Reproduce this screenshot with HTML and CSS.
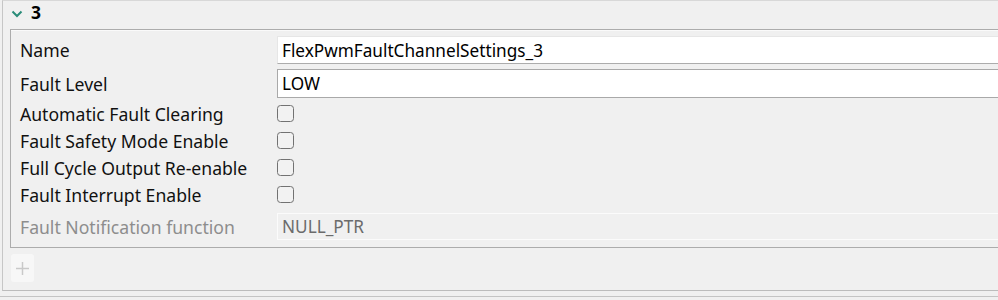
FILE: index.html
```html
<!DOCTYPE html>
<html>
  <head>
    <title>Fault Channel Settings</title>
    <meta charset="utf-8" />
    <link rel="stylesheet" href="styles.css">
  </head>
  <body>
    <div class="section">
      <div class="section-header">
        <svg class="chevron" width="12" height="8" viewBox="0 0 12 8">
          <polyline points="1.5,1.5 6,6 10.5,1.5" />
        </svg>
        <span class="section-title">3</span>
      </div>

      <div class="group">
        <div class="row row-name">
          <label class="label">Name</label>
          <input type="text" class="text-field name-field" value="FlexPwmFaultChannelSettings_3" />
        </div>

        <div class="row row-level">
          <label class="label">Fault Level</label>
          <input type="text" class="text-field combo-field" value="LOW" />
        </div>

        <div class="row row-check first-check">
          <label class="label">Automatic Fault Clearing</label>
          <input type="checkbox" class="check" />
        </div>

        <div class="row row-check">
          <label class="label">Fault Safety Mode Enable</label>
          <input type="checkbox" class="check" />
        </div>

        <div class="row row-check">
          <label class="label">Full Cycle Output Re-enable</label>
          <input type="checkbox" class="check" />
        </div>

        <div class="row row-check">
          <label class="label">Fault Interrupt Enable</label>
          <input type="checkbox" class="check" />
        </div>

        <div class="row row-disabled">
          <label class="label">Fault Notification function</label>
          <input type="text" class="text-field disabled-field" value="NULL_PTR" disabled />
        </div>
      </div>

      <div class="actions">
        <button class="add-button" disabled>
          <svg width="13" height="13" viewBox="0 0 13 13">
            <line x1="6.5" y1="0" x2="6.5" y2="13" />
            <line x1="0" y1="6.5" x2="13" y2="6.5" />
          </svg>
        </button>
      </div>
    </div>

    <div class="next-section"></div>
  </body>
</html>
```

FILE: styles.css
```css
:root {
  --bg: #f0f0f0;
  --line: #acacac;
  --value-column: 277px;
}

html,
body {
  margin: 0;
  overflow: hidden;
  background: var(--bg);
}

*,
input,
button {
  font-family: "Noto Sans", "Open Sans", sans-serif;
  font-size: 17.6px;
  box-sizing: border-box;
}

.section {
  width: 1030px;
  margin-left: 2px;
  border-top: 1px solid #d8d8d8;
  border-left: 1px solid #c6c6c6;
  border-bottom: 1px solid #bcbcbc;
}

.section-header {
  height: 28px;
  display: flex;
  align-items: center;
  padding-left: 8px;
}

.chevron {
  margin-right: 8px;
  margin-top: -2px;
}

.chevron polyline {
  fill: none;
  stroke: #2a8c79;
  stroke-width: 2;
}

.section-title {
  font-weight: bold;
  font-size: 17.5px;
  color: #000;
  line-height: 1;
  margin-top: -4px;
}

.group {
  margin-left: 7px;
  border-top: 1px solid var(--line);
  border-left: 1px solid var(--line);
  border-bottom: 1px solid var(--line);
  box-shadow: inset 0 1px #fafafa;
  padding: 6px 0 7px 9px;
}

.row {
  display: grid;
  grid-template-columns: calc(var(--value-column) - 20px) 1fr;
  align-items: center;
}

.label {
  color: #111;
  white-space: nowrap;
}

.text-field {
  margin: 0;
  padding: 0 0 0 4px;
  font-size: 17.2px;
  color: #000;
  background: #fff;
  outline: none;
  height: 100%;
}

.row-name {
  height: 28px;
}

.name-field {
  border: 1px solid #e6e6e6;
  border-bottom: 1px solid var(--line);
  border-right: none;
}

.row-level {
  height: 29px;
  margin-top: 5px;
}

.combo-field {
  border: 1px solid #a9a9a9;
  border-right: none;
}

.row-check {
  height: 27px;
}

.first-check {
  margin-top: 2px;
}

.check {
  appearance: none;
  width: 17px;
  height: 17px;
  margin: 0;
  border: 1.5px solid #727272;
  border-radius: 3.5px;
  background: #f2f2f2;
}

.row-disabled {
  height: 27px;
  margin-top: 5px;
}

.row-disabled .label {
  color: #8d8d8d;
}

.disabled-field {
  border: 1px solid #fbfbfb;
  border-right: none;
  background: #f0f0f0;
  color: #6b6b6b;
}

.actions {
  height: 42px;
  padding: 6px 0 0 8px;
}

.add-button {
  width: 23px;
  height: 28px;
  padding: 0;
  border: none;
  border-radius: 3px;
  background: #f7f7f7;
  display: flex;
  align-items: center;
  justify-content: center;
}

.add-button line {
  stroke: #c9c9c9;
  stroke-width: 1.5;
}

.next-section {
  margin-top: 5px;
  border-top: 1px solid #c4c4c4;
  height: 10px;
}
```
